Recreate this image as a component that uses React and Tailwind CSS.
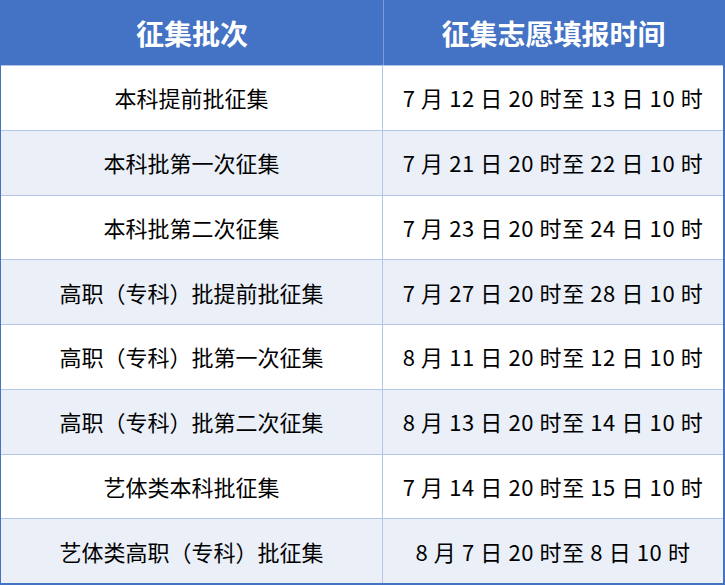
import React from "react";

const rows = [
  ["本科提前批征集", "7 月 12 日 20 时至 13 日 10 时"],
  ["本科批第一次征集", "7 月 21 日 20 时至 22 日 10 时"],
  ["本科批第二次征集", "7 月 23 日 20 时至 24 日 10 时"],
  ["高职（专科）批提前批征集", "7 月 27 日 20 时至 28 日 10 时"],
  ["高职（专科）批第一次征集", "8 月 11 日 20 时至 12 日 10 时"],
  ["高职（专科）批第二次征集", "8 月 13 日 20 时至 14 日 10 时"],
  ["艺体类本科批征集", "7 月 14 日 20 时至 15 日 10 时"],
  ["艺体类高职（专科）批征集", "8 月 7 日 20 时至 8 日 10 时"],
];

export default function App() {
  return (
    <div
      className="w-[725px] h-[585px] bg-white"
      style={{ fontFamily: '"Noto Sans CJK SC", "Noto Sans", sans-serif' }}
    >
      <div className="w-[725px] h-[585px] border-l border-r-2 border-b-2 border-[#4472c4] flex flex-col">
        <div className="flex h-[65px] bg-[#4472c4] text-white font-bold text-[28px]">
          <div className="w-[383px] border-r border-[#7d9bd4] flex items-center justify-center">
            征集批次
          </div>
          <div className="flex-1 flex items-center justify-center">征集志愿填报时间</div>
        </div>
        {rows.map((r, i) => (
          <div
            key={i}
            className={
              "flex flex-1 text-[22px] text-black border-t border-[#b4c6e7] " +
              (i % 2 === 1 ? "bg-[#eaeff8]" : "bg-white")
            }
          >
            <div className="w-[382px] border-r border-[#b4c6e7] flex items-center justify-center">
              {r[0]}
            </div>
            <div className="flex-1 flex items-center justify-center tracking-[0.6px]">
              {r[1]}
            </div>
          </div>
        ))}
      </div>
    </div>
  );
}
